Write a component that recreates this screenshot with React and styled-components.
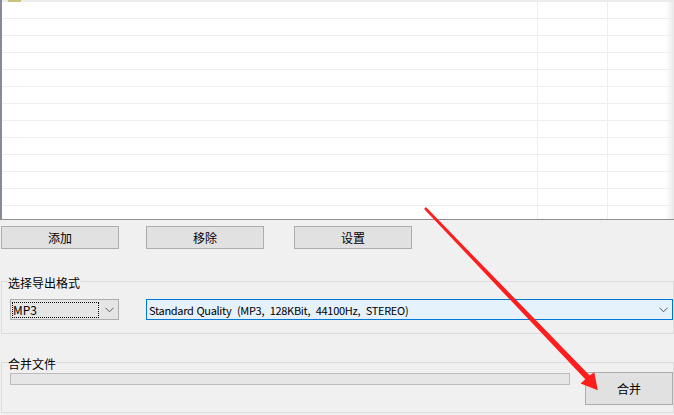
import React from 'react';
import styled, { createGlobalStyle } from 'styled-components';

const Global = createGlobalStyle`
  html, body { margin: 0; padding: 0; background: #f0f0f0; }
  body {
    font-family: "Noto Sans CJK SC", "Noto Sans", sans-serif;
    font-size: 12px;
    color: #000;
  }
  * { box-sizing: border-box; }
`;

const Window = styled.div`
  position: relative;
  width: 674px;
  height: 415px;
  overflow: hidden;
  background: #f0f0f0;
  display: flex;
  flex-direction: column;
`;

const ListView = styled.div`
  position: relative;
  height: 220px;
  flex: none;
  background: #fff;
  border-left: 2px solid #868b94;
  border-bottom: 1px solid #8e8e8e;
  overflow: hidden;
  display: flex;
  flex-direction: column;
  &::after {
    content: '';
    position: absolute;
    top: 0;
    right: 0;
    bottom: 0;
    width: 8px;
    background: linear-gradient(to right, rgba(236, 236, 236, 0), #e9e9e9);
  }
`;

const HeaderStrip = styled.div`
  height: 2px;
  flex: none;
  background: #ececec;
  display: flex;
  padding-left: 6px;
`;

const HeaderMark = styled.span`
  width: 13px;
  height: 2px;
  background: #c9c37c;
`;

const Row = styled.div`
  flex: none;
  height: 17px;
  display: grid;
  grid-template-columns: 536px 70px 1fr;
  border-bottom: 1px solid #eeeeee;
`;

const Cell = styled.div`
  border-right: ${(p) => (p.$last ? 'none' : '1px solid #eeeeee')};
`;

const ButtonBar = styled.div`
  margin-top: 6px;
  display: flex;
  height: 23px;
  flex: none;
`;

const Button = styled.button`
  font: inherit;
  color: #000;
  width: ${(p) => p.$w || 118}px;
  height: ${(p) => p.$h || 23}px;
  margin: 0 0 0 ${(p) => p.$ml || 0}px;
  padding: 0;
  background: #e1e1e1;
  border: 1px solid #adadad;
  border-radius: 0;
  display: flex;
  align-items: center;
  justify-content: center;
  line-height: 1;
  flex: none;
`;

const Group = styled.section`
  margin: ${(p) => p.$mt}px 0 0 1px;
  height: ${(p) => p.$h}px;
  flex: none;
  border: 1px solid #dcdcdc;
  display: flex;
  flex-direction: column;
`;

const Caption = styled.div`
  width: fit-content;
  height: 17px;
  line-height: 17px;
  margin: -8px 0 0 6px;
  background: #f0f0f0;
  white-space: nowrap;
`;

const FormatRow = styled.div`
  margin-top: 8px;
  padding-left: 8px;
  display: flex;
  gap: 27px;
`;

const Combo = styled.div`
  height: 21px;
  width: ${(p) => (p.$w ? `${p.$w}px` : 'auto')};
  flex: ${(p) => (p.$w ? 'none' : '1')};
  background: ${(p) => (p.$active ? '#e5f1fb' : '#e5e5e5')};
  border: 1px solid ${(p) => (p.$active ? '#0078d7' : '#adadad')};
  display: flex;
  align-items: center;
  padding-right: 4px;
`;

const ComboText = styled.div`
  flex: 1;
  white-space: pre;
  line-height: 14px;
  padding-left: 2px;
  font-size: 11px;
  letter-spacing: -0.3px;
  word-spacing: 0.6px;
`;

const FocusText = styled.div`
  width: 87px;
  height: 16px;
  margin: 2px 0 0 1px;
  border: 1px dotted #000;
  line-height: 14px;
  font-size: 12px;
  white-space: pre;
  align-self: flex-start;
`;

const Spacer = styled.div`
  flex: 1;
`;

const Chevron = styled.svg`
  width: 9px;
  height: 6px;
  flex: none;
`;

const MergeRow = styled.div`
  padding-left: 8px;
  display: flex;
  align-items: flex-start;
  gap: 15px;
`;

const Progress = styled.div`
  flex: 1;
  height: 12px;
  margin-top: 1px;
  background: #e6e6e6;
  border: 1px solid #bcbcbc;
`;

const Overlay = styled.svg`
  position: absolute;
  left: 0;
  top: 0;
  width: 674px;
  height: 415px;
  pointer-events: none;
`;

const Arrow = () => (
  <Overlay viewBox="0 0 674 415">
    <polygon
      points="424.1,208.9 425.9,207.1 589.7,375.5 594.3,372.2 597.8,390.2 580.6,383.6 585.3,379.3"
      fill="#fe1e1e"
    />
  </Overlay>
);

const ChevronIcon = () => (
  <Chevron viewBox="0 0 9 6">
    <polyline points="0.5,0.8 4.5,4.8 8.5,0.8" fill="none" stroke="#5a5a5a" strokeWidth="1" />
  </Chevron>
);

export default function App() {
  const rows = Array.from({ length: 13 });
  return (
    <>
      <Global />
      <Window>
        <ListView>
          <HeaderStrip>
            <HeaderMark />
          </HeaderStrip>
          {rows.map((_, i) => (
            <Row key={i}>
              <Cell />
              <Cell />
              <Cell $last />
            </Row>
          ))}
        </ListView>

        <ButtonBar>
          <Button $ml={1}>添加</Button>
          <Button $ml={27}>移除</Button>
          <Button $ml={30}>设置</Button>
        </ButtonBar>

        <Group $mt={32} $h={53}>
          <Caption>选择导出格式</Caption>
          <FormatRow>
            <Combo $w={109}>
              <FocusText>MP3</FocusText>
              <Spacer />
              <ChevronIcon />
            </Combo>
            <Combo $active>
              <ComboText>Standard Quality  (MP3,  128KBit,  44100Hz,  STEREO)</ComboText>
              <ChevronIcon />
            </Combo>
          </FormatRow>
        </Group>

        <Group $mt={28} $h={51}>
          <Caption>合并文件</Caption>
          <MergeRow>
            <Progress />
            <Button $w={88} $h={33}>合并</Button>
          </MergeRow>
        </Group>

        <Arrow />
      </Window>
    </>
  );
}
